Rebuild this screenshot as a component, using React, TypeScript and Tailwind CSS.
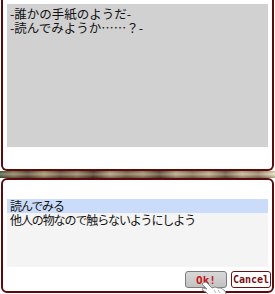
const jp = { fontFamily: '"Noto Sans CJK JP", "Noto Sans", sans-serif' };
const pixel = { fontFamily: '"DejaVu Sans Mono", "Liberation Mono", monospace' };

function HandCursor() {
  return (
    <svg
      className="absolute left-[200px] top-[281px] pointer-events-none"
      width="28"
      height="16"
      viewBox="0 0 28 16"
    >
      <path
        d="M3 2 L6 1 L12 7 L15 6 L18 7 L21 7 L25 10 L27 16 L10 16 L6 11 L2 9 L3 7 L7 8 L2 3 Z"
        fill="#ffffff"
        stroke="#8a8a8a"
        strokeWidth="1"
        strokeLinejoin="round"
      />
      <path d="M14 9 L16 12 M18 9 L20 12" stroke="#b5b5b5" strokeWidth="1" fill="none" />
    </svg>
  );
}

export default function App() {
  return (
    <div className="relative w-[275px] h-[294px] bg-white overflow-hidden flex flex-col">
      {/* Message window */}
      <div className="mx-[1px] h-[171px] shrink-0 border-x-2 border-b-2 border-[#5a0c0c] rounded-b-[6px] bg-white px-[4px] pt-[4px]">
        <div
          className="h-[143px] bg-[#d1d1d1] pl-[3px] pt-[3px] text-[12.5px] leading-[14px] text-[#111]"
          style={jp}
        >
          <p className="h-[14px]">-誰かの手紙のようだ-</p>
          <p className="h-[14px]">-読んでみようか……？-</p>
        </div>
      </div>

      {/* Textured divider */}
      <div className="h-[7px] shrink-0 bg-[linear-gradient(90deg,#4f5a3c_0%,#8c7a56_5%,#5e4a34_10%,#a8926c_16%,#6a5238_22%,#98805e_28%,#4e3a28_34%,#b09a76_40%,#7a6246_46%,#a48c68_52%,#5c4832_58%,#b8a47e_64%,#8a7252_70%,#c0aa84_76%,#6c5640_82%,#c8b48e_88%,#9a8262_94%,#f0e2c0_100%)]">
        <div className="h-full bg-[linear-gradient(180deg,rgba(0,0,0,0.15)_0%,rgba(255,255,255,0.25)_45%,rgba(0,0,0,0.3)_100%)]" />
      </div>

      {/* Choice window */}
      <div className="mx-[1px] h-[115px] shrink-0 border-2 border-[#5a0c0c] rounded-[6px] bg-white flex flex-col px-[4px]">
        <div
          className="mt-[19px] h-[68px] bg-[#f4f4f4] text-[12px] leading-[14px] text-[#111] tracking-[-1.1px]"
          style={jp}
        >
          <p className="h-[14px] bg-[#cadcf9] pl-[3px]">読んでみる</p>
          <p className="h-[14px] pl-[3px]">他人の物なので触らないようにしよう</p>
        </div>
        <div className="mt-[4px] mr-[-3px] flex justify-end gap-[4px]">
          <button
            className="w-[42px] h-[17px] rounded-[3px] border border-[#7c7c7c] bg-[linear-gradient(180deg,#d8d8d8_0%,#c2c2c2_100%)] text-[11px] font-bold leading-none text-[#c41818] pt-[1px]"
            style={pixel}
          >
            Ok!
          </button>
          <button
            className="w-[40px] h-[17px] rounded-[3px] border border-[#6a1212] bg-white text-[10px] font-bold leading-none text-[#7a1010] pt-[1px]"
            style={pixel}
          >
            Cancel
          </button>
        </div>
      </div>

      <HandCursor />
    </div>
  );
}
